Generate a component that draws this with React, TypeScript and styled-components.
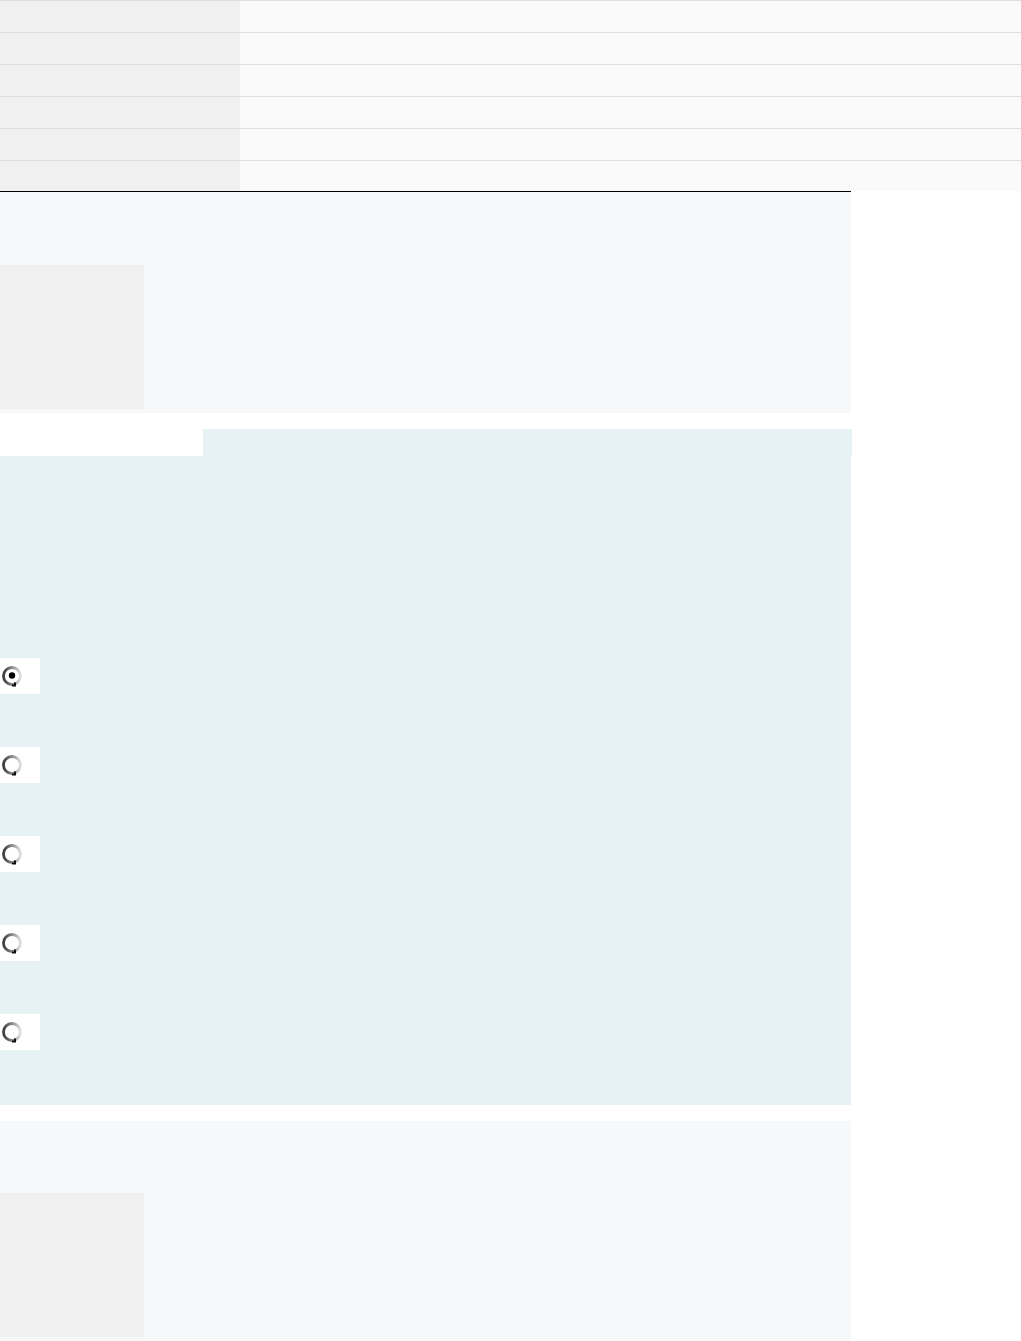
import { Fragment, useState } from "react";
import styled, { createGlobalStyle } from "styled-components";

const GlobalStyle = createGlobalStyle`
  html, body {
    margin: 0;
    padding: 0;
    background: #ffffff;
    font-family: "Liberation Sans", Arial, sans-serif;
  }
`;

const Page = styled.div`
  display: flex;
  flex-direction: column;
  width: 100%;
`;

const Table = styled.div`
  display: grid;
  grid-template-columns: 240px 1fr;
  width: 100%;
`;

const KeyCell = styled.div<{ $last?: boolean }>`
  height: ${({ $last }) => ($last ? "30px" : "31px")};
  border-top: 1px solid #dcdfe4;
  background: #f0f0f1;
`;

const ValueCell = styled.div<{ $last?: boolean }>`
  height: ${({ $last }) => ($last ? "30px" : "31px")};
  border-top: 1px solid #dcdfe4;
  background: #fafafa;
`;

const Panel = styled.section<{ $ruled?: boolean }>`
  width: 851px;
  box-sizing: border-box;
  background: #f7f8fa;
  padding: ${({ $ruled }) => ($ruled ? "73px 0 4px" : "72px 0 4px")};
  border-top: ${({ $ruled }) => ($ruled ? "1px solid #000000" : "none")};
`;

const Thumb = styled.div`
  width: 144px;
  height: 144px;
  background: #f0f0f0;
`;

const Spacer = styled.div`
  height: 16px;
`;

const TabRow = styled.div`
  display: flex;
  width: 852px;
`;

const TabGap = styled.div`
  width: 203px;
  height: 27px;
`;

const Tab = styled.div`
  flex: 1;
  height: 27px;
  background: #e6f2f4;
`;

const Choices = styled.div`
  width: 851px;
  background: #e6f2f4;
  display: flex;
  flex-direction: column;
  gap: 53px;
  padding: 202px 0 55px;
  box-sizing: border-box;
`;

const Choice = styled.label`
  width: 40px;
  height: 36px;
  background: #ffffff;
  display: flex;
  align-items: center;
  padding-left: 1px;
  box-sizing: border-box;
  cursor: pointer;
`;

const Radio = ({ checked }: { checked: boolean }) => (
  <svg width="22" height="24" viewBox="0 0 22 24">
    <defs>
      <linearGradient id="ring" x1="0" y1="0" x2="1" y2="0">
        <stop offset="0" stopColor="#3c3c3c" />
        <stop offset="0.5" stopColor="#8a8a8a" />
        <stop offset="1" stopColor="#e0e0e0" />
      </linearGradient>
    </defs>
    <circle cx="11" cy="12" r="8.5" fill="#ffffff" stroke="url(#ring)" strokeWidth="2.8" />
    <path d="M11 21.5 L14 21.5 L14 18.5" stroke="#111" strokeWidth="2" fill="none" />
    {checked && <circle cx="11" cy="11.5" r="3.2" fill="#000000" />}
  </svg>
);

const App = () => {
  const [selected, setSelected] = useState(0);
  const rows = [0, 1, 2, 3, 4, 5];
  const options = [0, 1, 2, 3, 4];

  return (
    <Page>
      <GlobalStyle />
      <Table>
        {rows.map((r) => (
          <Fragment key={r}>
            <KeyCell $last={r === rows.length - 1} />
            <ValueCell $last={r === rows.length - 1} />
          </Fragment>
        ))}
      </Table>
      <Panel $ruled>
        <Thumb />
      </Panel>
      <Spacer />
      <TabRow>
        <TabGap />
        <Tab />
      </TabRow>
      <Choices>
        {options.map((o) => (
          <Choice key={o} onClick={() => setSelected(o)}>
            <Radio checked={selected === o} />
          </Choice>
        ))}
      </Choices>
      <Spacer />
      <Panel>
        <Thumb />
      </Panel>
    </Page>
  );
};

export default App;
